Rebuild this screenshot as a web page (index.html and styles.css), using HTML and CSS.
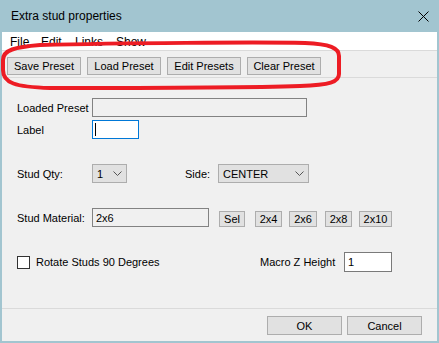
FILE: index.html
```html
<!DOCTYPE html>
<html>
	<head>
		<meta charset="utf-8" />
		<title>Extra stud properties</title>
		<link rel="stylesheet" href="styles.css">
	</head>
	<body>
		<div class="window">
			<div class="titlebar">
				<span class="title">Extra stud properties</span>
				<svg class="close" width="11" height="11" viewBox="0 0 11 11">
					<path d="M0.5 0.5 L10.5 10.5 M10.5 0.5 L0.5 10.5" stroke="#000" stroke-width="1" fill="none" />
				</svg>
			</div>

			<div class="menubar">
				<span>File</span>
				<span>Edit</span>
				<span>Links</span>
				<span>Show</span>
			</div>

			<div class="toolbar">
				<button class="btn tool-btn">Save Preset</button>
				<button class="btn tool-btn">Load Preset</button>
				<button class="btn tool-btn">Edit Presets</button>
				<button class="btn tool-btn">Clear Preset</button>
			</div>

			<div class="form">
				<div class="row">
					<span class="lbl">Loaded Preset</span>
					<div class="field field-ro preset-field"></div>
				</div>
				<div class="row row-tight">
					<span class="lbl">Label</span>
					<div class="field field-focus"><span class="caret"></span></div>
				</div>
				<div class="row row-gap">
					<span class="lbl">Stud Qty:</span>
					<div class="combo qty-combo">
						<span>1</span>
						<svg width="9" height="5" viewBox="0 0 9 5"><path d="M0.5 0.5 L4.5 4.5 L8.5 0.5" stroke="#555" fill="none" /></svg>
					</div>
					<span class="side-lbl">Side:</span>
					<div class="combo side-combo">
						<span>CENTER</span>
						<svg width="9" height="5" viewBox="0 0 9 5"><path d="M0.5 0.5 L4.5 4.5 L8.5 0.5" stroke="#555" fill="none" /></svg>
					</div>
				</div>
				<div class="row row-gap">
					<span class="lbl">Stud Material:</span>
					<div class="field field-ro material-field">2x6</div>
					<div class="sizes">
						<button class="btn small-btn sel-btn">Sel</button>
						<button class="btn small-btn b-2x4">2x4</button>
						<button class="btn small-btn b-2x6">2x6</button>
						<button class="btn small-btn b-2x8">2x8</button>
						<button class="btn small-btn b-2x10">2x10</button>
					</div>
				</div>
				<div class="row row-gap row-last">
					<div class="check-group">
						<span class="checkbox"></span>
						<span>Rotate Studs 90 Degrees</span>
					</div>
					<span class="macro-lbl">Macro Z Height</span>
					<div class="field macro-field">1</div>
				</div>
			</div>

			<div class="footer">
				<button class="btn dlg-btn">OK</button>
				<button class="btn dlg-btn">Cancel</button>
			</div>

			<!-- red markup drawn over the toolbar -->
			<svg class="markup" width="439" height="100" viewBox="0 0 439 100">
				<path d="M40 45 C120 43 260 42 305 43 C330 44 339 48 339 56 L339 74 C339 82 330 85 300 86 C240 88 120 88 50 88 C15 87 3 83 3 70 L3 60 C3 50 15 47 40 45 Z" stroke="#ed1c24" stroke-width="4" fill="none" />
			</svg>
		</div>
	</body>
</html>
```

FILE: styles.css
```css
*{
	margin: 0;
	padding: 0;
	box-sizing: border-box;
}

html,body{
	width: 100%;
	height: 100%;
	overflow: hidden;
}

body{
	background: #fff;
	font-family: "Liberation Sans", Arial, sans-serif;
	font-size: 11px;
	color: #000;
}

.window{
	position: relative;
	width: 439px;
	height: 343px;
	display: flex;
	flex-direction: column;
	background: #f0f0f0;
	border: 2px solid #a2c5d0;
	border-top: 0;
}

.titlebar{
	height: 32px;
	flex-shrink: 0;
	display: flex;
	align-items: center;
	justify-content: space-between;
	padding: 0 8px 0 9px;
	background: #a2c5d0;
	font-size: 12px;
}

.menubar{
	height: 18px;
	flex-shrink: 0;
	display: grid;
	grid-template-columns: 31px 34px 41px auto;
	padding: 2px 0 0 8px;
	background: #fff;
	font-size: 12px;
	line-height: 16px;
}

.toolbar{
	height: 28px;
	flex-shrink: 0;
	display: flex;
	align-items: flex-start;
	gap: 6px;
	padding: 6px 0 0 5px;
	border-top: 1px solid #dadada;
	border-bottom: 1px solid #dadada;
}

.btn{
	display: flex;
	align-items: center;
	justify-content: center;
	background: #e1e1e1;
	border: 1px solid #adadad;
	font-family: inherit;
	font-size: 11px;
	color: #000;
}

.tool-btn{
	width: 74px;
	height: 18px;
}

.form{
	flex: 1;
	padding: 20px 0 0 15px;
}

.row{
	display: flex;
	align-items: center;
	height: 19px;
}

.row-tight{
	margin-top: 3px;
}

.row-gap{
	margin-top: 25px;
}

.row-last{
	height: 20px;
}

.lbl{
	width: 75px;
	flex-shrink: 0;
}

.field{
	height: 19px;
	border: 1px solid #7a7a7a;
	background: #fff;
	padding-left: 3px;
	display: flex;
	align-items: center;
}

.field-ro{
	background: #f0f0f0;
	border-color: #828282;
}

.preset-field{
	width: 215px;
}

.field-focus{
	width: 47px;
	border-color: #0078d7;
	padding-left: 2px;
}

.caret{
	width: 1px;
	height: 13px;
	background: #000;
}

.combo{
	height: 19px;
	display: flex;
	align-items: center;
	justify-content: space-between;
	padding: 0 4px 0 4px;
	background: #e1e1e1;
	border: 1px solid #adadad;
}

.qty-combo{
	width: 35px;
}

.side-lbl{
	margin-left: 58px;
	width: 33px;
}

.side-combo{
	width: 91px;
}

.material-field{
	width: 117px;
}

.sizes{
	display: flex;
	align-self: flex-end;
	margin-left: 10px;
}

.small-btn{
	height: 16px;
}

.sel-btn{
	width: 26px;
}

.b-2x4{
	width: 27px;
	margin-left: 10px;
}

.b-2x6{
	width: 28px;
	margin-left: 7px;
}

.b-2x8{
	width: 27px;
	margin-left: 8px;
}

.b-2x10{
	width: 33px;
	margin-left: 7px;
}

.check-group{
	width: 243px;
	display: flex;
	align-items: center;
	gap: 6px;
}

.checkbox{
	width: 13px;
	height: 13px;
	background: #fff;
	border: 1px solid #333;
}

.macro-lbl{
	width: 84px;
}

.macro-field{
	width: 48px;
	height: 20px;
}

.footer{
	height: 33px;
	flex-shrink: 0;
	display: flex;
	justify-content: flex-end;
	align-items: flex-start;
	gap: 5px;
	padding: 7px 15px 0 0;
	border-top: 1px solid #dadada;
}

.dlg-btn{
	width: 75px;
	height: 19px;
}

.markup{
	position: absolute;
	left: -2px;
	top: 0;
	pointer-events: none;
}
```
